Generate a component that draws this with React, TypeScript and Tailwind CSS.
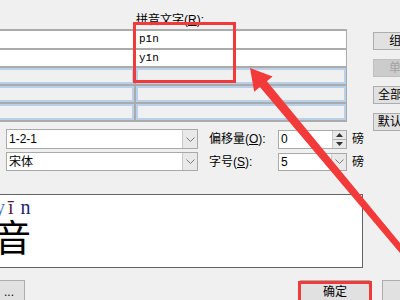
import React from "react";

const Chevron = () => (
  <svg width="9" height="5" viewBox="0 0 9 5" className="text-[#7a7a7a]">
    <polyline points="0.5,0.5 4.5,4.5 8.5,0.5" fill="none" stroke="currentColor" strokeWidth="1" />
  </svg>
);

const Combo = ({ value, className }: { value: string; className: string }) => (
  <div className={`flex items-stretch border border-[#a9a9a9] bg-white ${className}`}>
    <div className="flex flex-1 items-center pl-[2px] text-[12px]">{value}</div>
    <div className="flex w-[15px] items-center justify-center border-l border-[#c9c9c9] bg-[#e9e9e9]">
      <Chevron />
    </div>
  </div>
);

const Spin = () => (
  <div className="flex h-[19px] w-[69px] items-stretch border border-[#a9a9a9] bg-white">
    <div className="flex flex-1 items-center pl-[2px] text-[12px]">0</div>
    <div className="flex w-[14px] flex-col border-l border-[#c9c9c9] bg-[#e9e9e9]">
      <div className="flex flex-1 items-center justify-center border-b border-[#b0b0b0]">
        <svg width="7" height="4" viewBox="0 0 7 4"><polygon points="0,4 3.5,0 7,4" fill="#333" /></svg>
      </div>
      <div className="flex flex-1 items-center justify-center">
        <svg width="7" height="4" viewBox="0 0 7 4"><polygon points="0,0 3.5,4 7,0" fill="#333" /></svg>
      </div>
    </div>
  </div>
);

const SideButton = ({ label, disabled }: { label: string; disabled?: boolean }) => (
  <div
    className={`flex h-[18px] w-[74px] shrink-0 items-center justify-center border text-[12px] ${
      disabled ? "border-[#bfbfbf] bg-[#cccccc] text-[#a3a3a3]" : "border-[#adadad] bg-[#e1e1e1] text-black"
    }`}
  >
    {label}
  </div>
);

const WhiteRow = ({ h, right }: { h: string; right?: string }) => (
  <div className={`flex gap-[2px] bg-white ${h}`}>
    <div className="w-[144px]" />
    <div className="flex w-[210px] items-center pl-[3px] font-['Liberation_Mono',monospace] text-[11px]">
      {right}
    </div>
  </div>
);

const BlueRow = () => (
  <div className="flex h-[16px] gap-[2px]">
    <div className="w-[144px] border-2 border-[#b9d0ea] bg-[#f0f0f0]" />
    <div className="w-[210px] border-2 border-[#b9d0ea] bg-[#f0f0f0]" />
  </div>
);

export default function App() {
  return (
    <div className="relative h-[300px] w-[400px] overflow-hidden bg-[#f0f0f0] font-['Liberation_Sans','Noto_Sans_CJK_SC',sans-serif] text-black">
      <div className="flex flex-col">
        {/* header */}
        <div className="h-[29px] pl-[136px] pt-[13px] text-[12px] leading-[14px]">
          拼音文字(<span className="underline">R</span>):
        </div>

        {/* grid + side buttons */}
        <div className="flex h-[93px] items-start">
          <div className="-ml-[10px] flex w-[357px] shrink-0 flex-col gap-[2px] border-t-2 border-[#ababab] bg-[#ababab] pr-[1px] pb-[2px]">
            <WhiteRow h="h-[17px]" right="pīn" />
            <WhiteRow h="h-[16px]" right="yīn" />
            <BlueRow />
            <BlueRow />
            <BlueRow />
          </div>
          <div className="ml-[26px] mt-[3px] flex shrink-0 flex-col gap-[9px]">
            <SideButton label="组合(G)" />
            <SideButton label="单字(M)" disabled />
            <SideButton label="全部删除(V)" />
            <SideButton label="默认读音(D)" />
          </div>
        </div>

        {/* options */}
        <div className="mt-[7px] flex flex-col gap-[3px] text-[12px]">
          <div className="flex h-[20px] items-center">
            <Combo value="1-2-1" className="ml-[6px] h-[20px] w-[192px]" />
            <div className="ml-[11px] w-[69px]">
              偏移量(<span className="underline">O</span>):
            </div>
            <Spin />
            <div className="ml-[5px]">磅</div>
          </div>
          <div className="flex h-[19px] items-center">
            <Combo value="宋体" className="ml-[6px] h-[19px] w-[192px]" />
            <div className="ml-[11px] w-[69px]">
              字号(<span className="underline">S</span>):
            </div>
            <Combo value="5" className="h-[18px] w-[69px]" />
            <div className="ml-[5px]">磅</div>
          </div>
        </div>

        {/* preview */}
        <div className="-ml-[2px] mt-[23px] flex h-[74px] w-[365px] flex-col border border-[#646464] bg-white">
          <div className="flex h-[22px] items-end font-['Liberation_Serif',serif] text-[20px] leading-none">
            <span className="-ml-[4px] text-[#4a72b8]">y</span>
            <span className="ml-[3px] text-[#5a1a3a]">ī</span>
            <span className="ml-[7px] text-[#1c2470]">n</span>
          </div>
          <div className="-ml-[5px] mt-[1px] font-['Noto_Sans_CJK_SC',sans-serif] text-[37px] leading-none">音</div>
        </div>

        {/* bottom buttons */}
        <div className="mt-[12px] flex items-start text-[12px]">
          <div className="-ml-[40px] flex h-[24px] w-[65px] shrink-0 items-center justify-end border border-[#adadad] bg-[#e1e1e1] pr-[10px]">
            ...
          </div>
          <div className="ml-[275px] flex h-[24px] w-[70px] shrink-0 items-center justify-center border border-[#adadad] bg-[#e1e1e1]">
            确定
          </div>
          <div className="ml-[12px] h-[24px] w-[70px] shrink-0 border border-[#adadad] bg-[#e1e1e1]" />
        </div>
      </div>

      {/* annotations */}
      <div className="absolute left-[133px] top-[22px] h-[61px] w-[103px] border-[3px] border-[#f23a3a]" />
      <div className="absolute left-[298px] top-[281px] h-[24px] w-[74px] border-[3px] border-[#f23a3a]" />
      <svg className="absolute left-0 top-0" width="400" height="300" viewBox="0 0 400 300">
        <polygon
          points="250,68 272.6,76.4 266.9,81.2 418.7,265.8 414.1,269.6 259.9,87 254.2,91.8"
          fill="#f23a3a"
        />
      </svg>
    </div>
  );
}
